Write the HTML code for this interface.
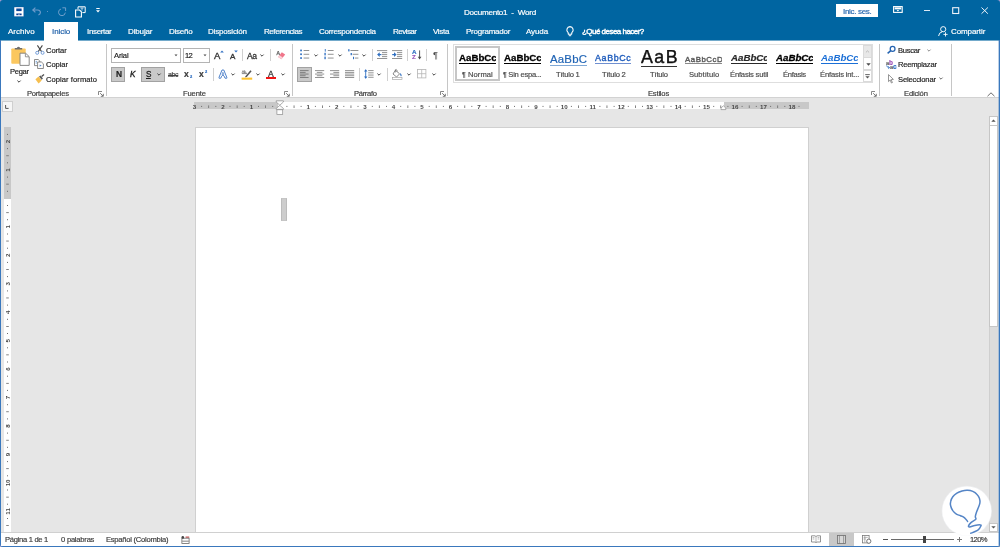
<!DOCTYPE html>
<html lang="es">
<head>
<meta charset="utf-8">
<title>Documento1 - Word</title>
<style>
html,body{margin:0;padding:0}
body{width:1000px;height:547px;overflow:hidden;position:relative;background:#e6e6e6;font-family:"Liberation Sans", sans-serif;font-size:8px;color:#222}
div,span,svg,i,b{position:absolute;box-sizing:border-box}
.n{position:static}
.t{will-change:transform;white-space:nowrap;line-height:1;font-style:normal;-webkit-text-stroke:0.18px currentColor}
svg{overflow:visible}
#win{left:0;top:0;width:1000px;height:547px;overflow:hidden}
#titlebar{left:0;top:0;width:1000px;height:40.5px;background:#0065a1}
#tab-on{left:44px;top:22px;width:34px;height:19px;background:#fff}
#signin{left:836px;top:4px;width:42px;height:13px;background:#fff}
#ribbon{left:0;top:40px;width:1000px;height:58px;background:#fff;border-bottom:1px solid #d2d2d2}
.gsep{top:4px;width:1px;height:52px;background:#c6c6c6}
.sep{width:1px;background:#d0d0d0}
.box{background:#fff;border:1px solid #b4b4b4}
.btn-on{background:#c9c9c9;border:1px solid #a2a2a2}
#gallery{left:453px;top:4px;width:420px;height:39px;border:1px solid #dedede;background:#fff}
#docarea{left:0;top:98px;width:1000px;height:435px;background:#e6e6e6}
#page{left:195px;top:28.5px;width:614px;height:420px;background:#fff;border:1px solid #d0d0d0;border-bottom:0}
#status{left:0;top:532px;width:1000px;height:15px;background:#fff;border-top:1px solid #d0d0d0}
#edge-l{left:0;top:40px;width:1px;height:507px;background:#3a78bd}
#edge-r{left:999px;top:40px;width:1px;height:507px;background:#3a78bd}
#edge-b{left:0;top:546px;width:1000px;height:1px;background:#3a78bd}

</style>
</head>
<body>
<div id="win">
<div id="titlebar">
<svg style="left:13.8px;top:6.5px" width="10" height="10" viewBox="0 0 10 10"><rect x="0.1" y="0.1" width="9.6" height="9.5" rx="0.5" fill="#fff" stroke="#0c3f95" stroke-width="0.3"/><rect x="2.3" y="1.5" width="5.3" height="2.6" fill="#0c3f95"/><rect x="3.1" y="2.3" width="3.7" height="0.9" fill="#0a5aa3"/><rect x="2.3" y="6.5" width="5.3" height="1.7" fill="#0c3f95"/><rect x="4.3" y="7.4" width="1.3" height="1.2" fill="#fff"/></svg>
<svg style="left:32.4px;top:6.6px" width="10" height="9" viewBox="0 0 10 9"><path d="M3.4 0.6 L0.8 3 L3.4 5.4 M0.8 3 H5.6 Q8.6 3.2 8.4 5.8 Q8.2 7.4 6.4 8" fill="none" stroke="#6c9bcb" stroke-width="1.2"/></svg>
<div style="left:46.5px;top:11px;width:1px;height:1px;background:#5f93c4"></div>
<svg style="left:57px;top:6.6px" width="10" height="10" viewBox="0 0 10 10"><path d="M8.3 5.6 A3.4 3.4 0 1 1 4 2" fill="none" stroke="#6f9fcb" stroke-width="1"/><path d="M5.4 0.8 H8.6 V4" fill="none" stroke="#6f9fcb" stroke-width="1"/></svg>
<svg style="left:74.5px;top:5.5px" width="11" height="12" viewBox="0 0 11 12"><path d="M3 3.2 V0.8 H10.2 V6.6 H7.4" fill="none" stroke="#fff" stroke-width="1"/><path d="M0.6 4 H4.6 L6.4 5.8 V11 H0.6 Z" fill="none" stroke="#fff" stroke-width="1.1"/><path d="M5.4 2 L8.6 2 M7 2 V4.6" stroke="#cfe0f0" stroke-width="0.9" fill="none"/></svg>
<svg style="left:96.2px;top:8.4px" width="4" height="5" viewBox="0 0 4 5"><rect x="0.3" y="0" width="3.4" height="1" fill="#fff"/><path d="M0 2.2 H4 L2 4.6 Z" fill="#fff"/></svg>
<span class="t" style="left:464px;font-size:8.1px;color:#ffffff;top:8.5px;letter-spacing:-0.252px;">Documento1&nbsp; -&nbsp; Word</span><div id="signin"><span class="t" style="left:6.6px;font-size:8px;color:#2566ae;top:3.75px;letter-spacing:-0.318px;">Inic. ses.</span></div>
<svg style="left:892.6px;top:6.4px" width="10" height="7" viewBox="0 0 10 7"><rect x="0.6" y="0.6" width="8.6" height="5.8" fill="none" stroke="#fff" stroke-width="1.1"/><rect x="1.6" y="1.4" width="6.6" height="2" fill="#fff"/><path d="M3.6 4 H6.2 L4.9 5.6 Z" fill="#fff"/></svg>
<div style="left:924px;top:9.6px;width:6.4px;height:1.2px;background:#dbe8f4"></div>
<svg style="left:952px;top:6.6px" width="8" height="8" viewBox="0 0 8 8"><rect x="0.7" y="0.7" width="6" height="5.8" fill="none" stroke="#eef4fa" stroke-width="1.1"/></svg>
<svg style="left:981.4px;top:6.8px" width="8" height="8" viewBox="0 0 8 8"><path d="M0.5 0.5 L6.9 6.7 M6.9 0.5 L0.5 6.7" stroke="#eef4fa" stroke-width="1" fill="none"/></svg>
<div id="tab-on"></div>
<span class="t" style="left:8.4px;font-size:8px;color:#ffffff;top:28.25px;letter-spacing:-0.012px;">Archivo</span><span class="t" style="left:51.8px;font-size:8px;color:#1d5fa8;top:28.25px;letter-spacing:-0.081px;">Inicio</span><span class="t" style="left:86.6px;font-size:8px;color:#ffffff;top:28.25px;letter-spacing:-0.341px;">Insertar</span><span class="t" style="left:128px;font-size:8px;color:#ffffff;top:28.25px;letter-spacing:-0.135px;">Dibujar</span><span class="t" style="left:169px;font-size:8px;color:#ffffff;top:28.25px;letter-spacing:-0.251px;">Diseño</span><span class="t" style="left:208.4px;font-size:8px;color:#ffffff;top:28.25px;letter-spacing:-0.191px;">Disposición</span><span class="t" style="left:264px;font-size:8px;color:#ffffff;top:28.25px;letter-spacing:-0.426px;">Referencias</span><span class="t" style="left:319px;font-size:8px;color:#ffffff;top:28.25px;letter-spacing:-0.289px;">Correspondencia</span><span class="t" style="left:392.6px;font-size:8px;color:#ffffff;top:28.25px;letter-spacing:-0.532px;">Revisar</span><span class="t" style="left:432.5px;font-size:8px;color:#ffffff;top:28.25px;letter-spacing:-0.328px;">Vista</span><span class="t" style="left:465.5px;font-size:8px;color:#ffffff;top:28.25px;letter-spacing:-0.226px;">Programador</span><span class="t" style="left:526px;font-size:8px;color:#ffffff;top:28.25px;letter-spacing:-0.109px;">Ayuda</span><svg style="left:566px;top:26.4px" width="8" height="11" viewBox="0 0 8 11"><path d="M4 0.6 A3.3 3.3 0 0 1 6 6.4 L5.6 8.2 H2.4 L2 6.4 A3.3 3.3 0 0 1 4 0.6 Z" fill="none" stroke="#fff" stroke-width="1.1"/><path d="M2.8 9.7 H5.2" stroke="#fff" stroke-width="1"/></svg>
<span class="t" style="left:581.6px;font-size:8px;color:#ffffff;top:28.25px;letter-spacing:-0.525px;-webkit-text-stroke:0.4px #fff;">¿Qué desea hacer?</span><svg style="left:938px;top:26px" width="10" height="10.5" viewBox="0 0 10 10.5"><circle cx="5.2" cy="3.2" r="2.6" fill="none" stroke="#fff" stroke-width="0.95"/><path d="M0.6 10 Q1 6.4 4.2 5.8" fill="none" stroke="#fff" stroke-width="0.95"/><path d="M5.4 8.4 H9.6 M7.5 6.3 V10.5" stroke="#fff" stroke-width="0.9"/></svg>
<span class="t" style="left:950.5px;font-size:8px;color:#ffffff;top:28.25px;letter-spacing:-0.103px;">Compartir</span></div>
<div id="ribbon">
<div style="left:0;top:0;width:44px;height:1px;background:#73aacb"></div><div style="left:78px;top:0;width:922px;height:1px;background:#73aacb"></div>
<svg style="left:11px;top:5.5px" width="19" height="20" viewBox="0 0 19 20"><rect x="0.3" y="2.4" width="14.4" height="15.4" rx="0.8" fill="#fbc75f"/><path d="M3.8 3.6 V2 H5.8 Q7.5 -0.4 9.2 2 H11.2 V3.6 Z" fill="#6d6d6d"/><path d="M9 7.2 H14.6 L18.2 10.6 V19.4 H9 Z" fill="#fff" stroke="#7d7d7d" stroke-width="0.9"/><path d="M14.4 7.4 V10.8 H18" fill="none" stroke="#7d7d7d" stroke-width="0.8"/></svg>
<span class="t" style="left:9.75px;font-size:7.6px;color:#222222;top:28px;letter-spacing:-0.303px;">Pegar</span><svg style="left:17px;top:40px" width="4" height="3" viewBox="0 0 4 3"><path d="M0.4 0.6 L2 2.2 L3.6 0.6" fill="none" stroke="#404040" stroke-width="1"/></svg>
<svg style="left:34.5px;top:4.5px" width="10" height="10" viewBox="0 0 10 10"><path d="M2.4 0.4 L6.6 6.6 M7.4 0.4 L3.2 6.6" stroke="#444" stroke-width="1.05" fill="none"/><circle cx="2.2" cy="7.8" r="1.5" fill="none" stroke="#6f9ad6" stroke-width="0.95"/><circle cx="7.6" cy="7.8" r="1.5" fill="none" stroke="#6f9ad6" stroke-width="0.95"/></svg>
<span class="t" style="left:46px;font-size:7.6px;color:#222222;top:7px;letter-spacing:-0.085px;">Cortar</span><svg style="left:34px;top:19px" width="10" height="10" viewBox="0 0 10 10"><path d="M0.5 0.5 H4.2 L5.8 2 V6.6 H0.5 Z" fill="#fff" stroke="#707070" stroke-width="0.8"/><path d="M3.6 3 H7.4 L9.4 4.8 V9.5 H3.6 Z" fill="#fff" stroke="#707070" stroke-width="0.8"/><path d="M5.6 5.4 L7.6 6.6 L5.6 7.8 Z" fill="#4a86cf"/><path d="M1.6 2.4 H3 M1.6 4 H3" stroke="#4a86cf" stroke-width="0.7"/></svg>
<span class="t" style="left:46px;font-size:7.6px;color:#222222;top:21.25px;letter-spacing:-0.062px;">Copiar</span><svg style="left:34.5px;top:33.5px" width="10" height="10" viewBox="0 0 10 10"><path d="M0.4 5.2 L3.6 2.6 L6.6 6.4 L3.6 9.4 Z" fill="#f6bf4f"/><path d="M4 2.6 L5.6 1.4 L8 4.4 L6.6 5.8 Z" fill="#5d5d5d"/><path d="M6.6 2.4 L9 0.4" stroke="#4d4d4d" stroke-width="1.3"/></svg>
<span class="t" style="left:46px;font-size:7.6px;color:#222222;top:35.5px;letter-spacing:0.055px;">Copiar formato</span><span class="t" style="left:27.25px;font-size:7.6px;color:#3a3a3a;top:50px;letter-spacing:-0.247px;">Portapapeles</span><svg style="left:98.3px;top:50.8px" width="6" height="6" viewBox="0 0 6 6"><path d="M0.5 4 V0.5 H4" fill="none" stroke="#7a7a7a" stroke-width="0.9"/><path d="M2.2 2.2 L5 5 M5.3 2.8 V5.3 H2.8" fill="none" stroke="#6a6a6a" stroke-width="0.9"/></svg>
<div class="gsep" style="left:106px"></div>
<div class="box" style="left:111px;top:7.5px;width:69.6px;height:15px"><span class="t" style="left:1.6px;font-size:7.6px;color:#222222;top:3.5px;letter-spacing:-0.141px;">Arial</span></div>
<svg style="left:174px;top:13.8px" width="4" height="3" viewBox="0 0 4 3"><path d="M0.5 0.6 H3.5 L2 2.3 Z" fill="#444"/></svg>
<div class="box" style="left:182.5px;top:7.5px;width:27px;height:15px"><span class="t" style="left:1.6px;font-size:7.6px;color:#222222;top:3.5px;letter-spacing:-0.627px;">12</span></div>
<svg style="left:202.6px;top:13.8px" width="4" height="3" viewBox="0 0 4 3"><path d="M0.5 0.6 H3.5 L2 2.3 Z" fill="#444"/></svg>
<span class="t" style="left:214.2px;font-size:9.5px;color:#333;top:10.5px;-webkit-text-stroke:0.35px #333;">A</span><svg style="left:219.5px;top:10.2px" width="4" height="3" viewBox="0 0 4 3"><path d="M0.2 2.6 H3.8 L2 0.4 Z" fill="#2f6fc1"/></svg>
<span class="t" style="left:230px;font-size:8px;color:#333;top:12.5px;-webkit-text-stroke:0.35px #333;">A</span><svg style="left:234.2px;top:10.2px" width="4" height="3" viewBox="0 0 4 3"><path d="M0.2 0.4 H3.8 L2 2.6 Z" fill="#2f6fc1"/></svg>
<div class="sep" style="left:242.3px;top:8.8px;height:12.4px"></div>
<span class="t" style="left:247px;font-size:8.5px;color:#333;top:11.5px;letter-spacing:-0.403px;-webkit-text-stroke:0.3px #333;">Aa</span><svg style="left:260px;top:13.6px" width="4" height="3" viewBox="0 0 4 3"><path d="M0.4 0.6 L2 2.2 L3.6 0.6" fill="none" stroke="#404040" stroke-width="1"/></svg>
<div class="sep" style="left:270.4px;top:8.8px;height:12.4px"></div>
<svg style="left:275.5px;top:9.5px" width="10" height="10" viewBox="0 0 10 10"><path d="M0.6 5.2 L2.2 1 L3.8 5.2 M1.2 3.8 H3.2" fill="none" stroke="#555" stroke-width="0.8"/><path d="M5.8 2.2 L9.2 4.4 L5.4 9.2 L2.2 7 Z" fill="#f0758a"/><path d="M3.5 5.3 L6.8 7.5 L5.4 9.2 L2.2 7 Z" fill="#fbd0d7"/></svg>
<div class="btn-on" style="left:111px;top:27px;width:14.2px;height:14.8px"><span class="t" style="left:3.7px;font-size:8.4px;color:#1e1e1e;font-weight:700;top:1.5px;letter-spacing:-0.263px;">N</span></div>
<span class="t" style="left:130.4px;font-size:8.2px;color:#1e1e1e;font-style:italic;top:30.5px;letter-spacing:-0.069px;-webkit-text-stroke:0.35px #1e1e1e;">K</span><div class="btn-on" style="left:141px;top:27px;width:23.8px;height:14.8px"><span class="t" style="left:4.2px;font-size:8.2px;color:#1e1e1e;top:2.5px;letter-spacing:-0.669px;text-decoration:underline;-webkit-text-stroke:0.3px #1e1e1e;">S</span></div>
<svg style="left:157.4px;top:33px" width="4" height="3" viewBox="0 0 4 3"><path d="M0.4 0.6 L2 2.2 L3.6 0.6" fill="none" stroke="#404040" stroke-width="1"/></svg>
<span class="t" style="left:168px;font-size:7px;color:#444;top:30.5px;letter-spacing:-0.366px;text-decoration:line-through;text-decoration-thickness:0.6px;">abc</span><span class="t" style="left:184px;font-size:8.5px;color:#3a3a3a;font-weight:700;top:29.5px;letter-spacing:-0.134px;">x</span><span class="t" style="left:189.6px;font-size:4px;color:#2f6fc1;font-weight:700;top:34.5px;">2</span><span class="t" style="left:199px;font-size:8.5px;color:#3a3a3a;font-weight:700;top:29.5px;letter-spacing:-0.134px;">x</span><span class="t" style="left:204.6px;font-size:4px;color:#2f6fc1;font-weight:700;top:29.5px;">2</span><div class="sep" style="left:212.5px;top:28px;height:12.6px"></div>
<svg style="left:217.6px;top:28.8px" width="10" height="10" viewBox="0 0 10 10"><path d="M1 9.2 L1 8.4 L4 1 H5.8 L8.8 8.4 L8.8 9.2 L7 9.2 L6.2 7.2 Q4.9 5 3.6 7.2 L2.8 9.2 Z" fill="#fff" stroke="#3b74c4" stroke-width="0.9" stroke-linejoin="round"/><path d="M4.9 3.2 L4 5.4 H5.8 Z" fill="none" stroke="#3b74c4" stroke-width="0.6"/></svg>
<svg style="left:230.8px;top:32.7px" width="4" height="3" viewBox="0 0 4 3"><path d="M0.4 0.6 L2 2.2 L3.6 0.6" fill="none" stroke="#404040" stroke-width="1"/></svg>
<svg style="left:241px;top:28.5px" width="12" height="11" viewBox="0 0 12 11"><rect x="0.6" y="8.6" width="10.6" height="2.1" fill="#fdc230"/><path d="M4.4 7.2 L9.4 1.2 L10.6 2.2 L5.8 8 L4 8.2 Z" fill="#555"/><path d="M0.8 4.6 H6" stroke="#555" stroke-width="0.7"/><path d="M1 4 L2 1.6 L3 4 M3.6 1.2 V4 M3.6 3 Q5.2 2.2 5 4" fill="none" stroke="#555" stroke-width="0.6"/></svg>
<svg style="left:255.8px;top:32.7px" width="4" height="3" viewBox="0 0 4 3"><path d="M0.4 0.6 L2 2.2 L3.6 0.6" fill="none" stroke="#404040" stroke-width="1"/></svg>
<span class="t" style="left:268.3px;font-size:8.6px;color:#3a3a3a;top:29.75px;-webkit-text-stroke:0.3px #3a3a3a;">A</span><div style="left:266px;top:37.1px;width:10.2px;height:2.1px;background:#f01414"></div>
<svg style="left:280.6px;top:32.7px" width="4" height="3" viewBox="0 0 4 3"><path d="M0.4 0.6 L2 2.2 L3.6 0.6" fill="none" stroke="#404040" stroke-width="1"/></svg>
<span class="t" style="left:183px;font-size:7.6px;color:#3a3a3a;top:50px;letter-spacing:-0.143px;">Fuente</span><svg style="left:284.2px;top:50.8px" width="6" height="6" viewBox="0 0 6 6"><path d="M0.5 4 V0.5 H4" fill="none" stroke="#7a7a7a" stroke-width="0.9"/><path d="M2.2 2.2 L5 5 M5.3 2.8 V5.3 H2.8" fill="none" stroke="#6a6a6a" stroke-width="0.9"/></svg>
<div class="gsep" style="left:292px"></div>
<svg style="left:299.6px;top:9.4px" width="12" height="12" viewBox="0 0 12 12"><rect x="3.6" y="1" width="5.6" height="0.9" fill="#868686"/><rect x="3.6" y="4.8" width="5.6" height="0.9" fill="#868686"/><rect x="3.6" y="8.6" width="5.6" height="0.9" fill="#868686"/><rect x="0.2" y="0.6" width="1.7" height="1.7" fill="#2f6fc1"/><rect x="0.2" y="4.4" width="1.7" height="1.7" fill="#2f6fc1"/><rect x="0.2" y="8.2" width="1.7" height="1.7" fill="#2f6fc1"/></svg>
<svg style="left:313.6px;top:13.7px" width="4" height="3" viewBox="0 0 4 3"><path d="M0.4 0.6 L2 2.2 L3.6 0.6" fill="none" stroke="#404040" stroke-width="1"/></svg>
<svg style="left:324px;top:9.4px" width="12" height="12" viewBox="0 0 12 12"><rect x="3.8" y="1" width="5.8" height="0.9" fill="#868686"/><rect x="3.8" y="4.8" width="5.8" height="0.9" fill="#868686"/><rect x="3.8" y="8.6" width="5.8" height="0.9" fill="#868686"/><rect x="0.8" y="0" width="0.9" height="2.6" fill="#2f6fc1"/><rect x="0.2" y="3.8" width="1.8" height="2.6" fill="#2f6fc1" opacity="0.75"/><rect x="0.2" y="7.6" width="1.8" height="2.6" fill="#2f6fc1" opacity="0.75"/></svg>
<svg style="left:338.1px;top:13.7px" width="4" height="3" viewBox="0 0 4 3"><path d="M0.4 0.6 L2 2.2 L3.6 0.6" fill="none" stroke="#404040" stroke-width="1"/></svg>
<svg style="left:348px;top:9.4px" width="12" height="12" viewBox="0 0 12 12"><rect x="2.4" y="1" width="8" height="0.9" fill="#868686"/><rect x="4.6" y="4.8" width="5.8" height="0.9" fill="#868686"/><rect x="6.8" y="8.6" width="3.6" height="0.9" fill="#868686"/><rect x="0.2" y="0.2" width="1.3" height="2.2" fill="#2f6fc1"/><rect x="2.6" y="4" width="1.3" height="2.2" fill="#2f6fc1"/><rect x="5" y="7.8" width="1" height="2.4" fill="#2f6fc1"/></svg>
<svg style="left:361.6px;top:13.7px" width="4" height="3" viewBox="0 0 4 3"><path d="M0.4 0.6 L2 2.2 L3.6 0.6" fill="none" stroke="#404040" stroke-width="1"/></svg>
<div class="sep" style="left:371.8px;top:8.6px;height:12.4px"></div>
<svg style="left:376.6px;top:9.9px" width="12" height="12" viewBox="0 0 12 12"><rect x="0" y="0.2" width="10.2" height="0.9" fill="#868686"/><rect x="5" y="2.2" width="5.2" height="0.9" fill="#868686"/><rect x="5" y="4.2" width="5.2" height="0.9" fill="#868686"/><rect x="5" y="6.2" width="5.2" height="0.9" fill="#868686"/><rect x="0" y="8" width="10.2" height="0.9" fill="#868686"/><path d="M4.4 4.6 H1.2" fill="none" stroke="#2f6fc1" stroke-width="1.2"/><path d="M0.1 4.6 L2.7 2.3 V6.9 Z" fill="#2f6fc1"/></svg>
<svg style="left:391.6px;top:9.9px" width="12" height="12" viewBox="0 0 12 12"><rect x="0" y="0.2" width="10.2" height="0.9" fill="#868686"/><rect x="5" y="2.2" width="5.2" height="0.9" fill="#868686"/><rect x="5" y="4.2" width="5.2" height="0.9" fill="#868686"/><rect x="5" y="6.2" width="5.2" height="0.9" fill="#868686"/><rect x="0" y="8" width="10.2" height="0.9" fill="#868686"/><path d="M0.2 4.6 H3.4" fill="none" stroke="#2f6fc1" stroke-width="1.2"/><path d="M4.6 4.6 L2 2.3 V6.9 Z" fill="#2f6fc1"/></svg>
<div class="sep" style="left:406.6px;top:8.6px;height:12.4px"></div>
<span class="t" style="left:411.8px;font-size:6.2px;color:#2f6fc1;font-weight:700;top:8.75px;">A</span><span class="t" style="left:412.1px;font-size:6.2px;color:#9a55b8;font-weight:700;top:14.25px;">Z</span><svg style="left:416.6px;top:9.6px" width="5" height="10" viewBox="0 0 5 10"><path d="M2.6 0.4 V7.6" fill="none" stroke="#4a4a4a" stroke-width="0.9"/><path d="M0.8 6.8 H4.4 L2.6 9.4 Z" fill="#4a4a4a"/></svg>
<div class="sep" style="left:425.8px;top:8.6px;height:12.4px"></div>
<span class="t" style="left:432.8px;font-size:9.4px;color:#4a4a4a;top:9.5px;-webkit-text-stroke:0;">¶</span><div class="btn-on" style="left:297px;top:27px;width:14.6px;height:14.8px"></div>
<svg style="left:300px;top:30.4px" width="12" height="12" viewBox="0 0 12 12"><rect x="0" y="0.2" width="8.6" height="0.9" fill="#757575"/><rect x="0" y="1.9" width="5.6" height="0.9" fill="#757575"/><rect x="0" y="3.6" width="8.6" height="0.9" fill="#757575"/><rect x="0" y="5.3" width="5.6" height="0.9" fill="#757575"/><rect x="0" y="7" width="8.6" height="0.9" fill="#757575"/></svg>
<svg style="left:314.8px;top:30.4px" width="12" height="12" viewBox="0 0 12 12"><rect x="0" y="0.2" width="9.2" height="0.9" fill="#868686"/><rect x="1.8" y="1.9" width="5.6" height="0.9" fill="#868686"/><rect x="0" y="3.6" width="9.2" height="0.9" fill="#868686"/><rect x="1.8" y="5.3" width="5.6" height="0.9" fill="#868686"/><rect x="0" y="7" width="9.2" height="0.9" fill="#868686"/></svg>
<svg style="left:330px;top:30.4px" width="12" height="12" viewBox="0 0 12 12"><rect x="0" y="0.2" width="9.2" height="0.9" fill="#868686"/><rect x="3.4" y="1.9" width="5.8" height="0.9" fill="#868686"/><rect x="0" y="3.6" width="9.2" height="0.9" fill="#868686"/><rect x="3.4" y="5.3" width="5.8" height="0.9" fill="#868686"/><rect x="0" y="7" width="9.2" height="0.9" fill="#868686"/></svg>
<svg style="left:345px;top:30.4px" width="12" height="12" viewBox="0 0 12 12"><rect x="0" y="0.2" width="9.2" height="0.9" fill="#868686"/><rect x="0" y="1.9" width="9.2" height="0.9" fill="#868686"/><rect x="0" y="3.6" width="9.2" height="0.9" fill="#868686"/><rect x="0" y="5.3" width="9.2" height="0.9" fill="#868686"/><rect x="0" y="7" width="9.2" height="0.9" fill="#868686"/></svg>
<div class="sep" style="left:359.2px;top:28px;height:12.6px"></div>
<svg style="left:364px;top:29px" width="12" height="12" viewBox="0 0 12 12"><rect x="4.2" y="1.2" width="5.4" height="0.9" fill="#868686"/><rect x="4.2" y="3.4" width="5.4" height="0.9" fill="#868686"/><rect x="4.2" y="5.6" width="5.4" height="0.9" fill="#868686"/><rect x="4.2" y="7.8" width="5.4" height="0.9" fill="#868686"/><path d="M1.7 0.8 V9.2" stroke="#2f6fc1" stroke-width="0.9"/><path d="M0 2.6 L1.7 0.2 L3.4 2.6 Z M0 7.4 L1.7 9.8 L3.4 7.4 Z" fill="#2f6fc1"/></svg>
<svg style="left:377.1px;top:32.8px" width="4" height="3" viewBox="0 0 4 3"><path d="M0.4 0.6 L2 2.2 L3.6 0.6" fill="none" stroke="#404040" stroke-width="1"/></svg>
<div class="sep" style="left:387.4px;top:28px;height:12.6px"></div>
<svg style="left:392.4px;top:28.6px" width="11" height="11" viewBox="0 0 11 11"><path d="M3.4 1.2 L7.6 4.8 L4.6 8 L1 5 Z" fill="#fff" stroke="#6a6a6a" stroke-width="0.8" stroke-linejoin="round"/><path d="M3.4 3.4 V0.8 Q4.4 -0.2 5 1.4 V2.6" fill="none" stroke="#6a6a6a" stroke-width="0.7"/><path d="M8.2 4 Q10.6 6 9 7.6 Q7.8 7 8.2 4 Z" fill="#2f6fc1"/><rect x="0.4" y="8.6" width="9.6" height="2" fill="#fff" stroke="#9a9a9a" stroke-width="0.6"/></svg>
<svg style="left:406.8px;top:32.8px" width="4" height="3" viewBox="0 0 4 3"><path d="M0.4 0.6 L2 2.2 L3.6 0.6" fill="none" stroke="#404040" stroke-width="1"/></svg>
<svg style="left:417px;top:29px" width="10" height="10" viewBox="0 0 10 10"><rect x="0.5" y="0.5" width="8.4" height="8.4" fill="none" stroke="#b4b4b4" stroke-width="0.8"/><path d="M4.7 0.5 V8.9 M0.5 4.7 H8.9" stroke="#b4b4b4" stroke-width="0.8"/></svg>
<svg style="left:431.5px;top:32.8px" width="4" height="3" viewBox="0 0 4 3"><path d="M0.4 0.6 L2 2.2 L3.6 0.6" fill="none" stroke="#404040" stroke-width="1"/></svg>
<span class="t" style="left:353.75px;font-size:7.6px;color:#3a3a3a;top:50px;letter-spacing:-0.329px;">Párrafo</span><svg style="left:440px;top:50.8px" width="6" height="6" viewBox="0 0 6 6"><path d="M0.5 4 V0.5 H4" fill="none" stroke="#7a7a7a" stroke-width="0.9"/><path d="M2.2 2.2 L5 5 M5.3 2.8 V5.3 H2.8" fill="none" stroke="#6a6a6a" stroke-width="0.9"/></svg>
<div class="gsep" style="left:447.4px"></div>
<div id="gallery"></div>
<div style="left:455px;top:6px;width:44.8px;height:34.8px;border:2px solid #c6c6c6;background:#fff"></div>
<div style="left:459px;top:4px;width:36.8px;height:36px;overflow:hidden"><span class="t" style="left:0px;font-size:9.7px;color:#000;font-weight:700;top:9px;-webkit-text-stroke:0.3px #000;">AaBbCcDd</span></div>
<div style="left:459px;top:22.5px;width:36.8px;height:1.1px;background:#000"></div>
<span class="t" style="left:461.9px;font-size:7.6px;color:#4a4a4a;top:30.5px;letter-spacing:0.055px;"><span class="n" style="font-size:7px">¶</span> Normal</span><div style="left:504px;top:4px;width:37px;height:36px;overflow:hidden"><span class="t" style="left:0px;font-size:9.7px;color:#000;font-weight:700;top:9px;-webkit-text-stroke:0.3px #000;">AaBbCcDd</span></div>
<div style="left:504px;top:22.5px;width:37px;height:1.1px;background:#000"></div>
<span class="t" style="left:503px;font-size:7.6px;color:#4a4a4a;top:30.5px;letter-spacing:-0.259px;"><span class="n" style="font-size:7px">¶</span> Sin espa...</span><div style="left:549.8px;top:4px;width:36.8px;height:36px;overflow:hidden"><span class="t" style="left:0px;font-size:11.4px;color:#1f63b4;top:10px;letter-spacing:0.221px;-webkit-text-stroke:0.2px #1f63b4;">AaBbC</span></div>
<div style="left:549.8px;top:24.6px;width:36.8px;height:1.1px;background:#7fa8d6"></div>
<span class="t" style="left:556px;font-size:7.6px;color:#4a4a4a;top:30.5px;letter-spacing:-0.216px;">Título 1</span><div style="left:595px;top:4px;width:36.4px;height:36px;overflow:hidden"><span class="t" style="left:0px;font-size:8.9px;color:#1f5cbc;top:10.25px;letter-spacing:0.64px;-webkit-text-stroke:0.35px #1f5cbc;">AaBbCc</span></div>
<div style="left:595px;top:22.6px;width:36.4px;height:1px;background:#6f8fd0"></div>
<span class="t" style="left:601.5px;font-size:7.6px;color:#4a4a4a;top:30.5px;letter-spacing:-0.216px;">Título 2</span><div style="left:640.6px;top:9.6px;width:36.6px;height:30.4px;overflow:hidden"><span class="t" style="left:0px;font-size:17.8px;color:#111;top:-0.75px;letter-spacing:1.464px;-webkit-text-stroke:0.4px #111;">AaB</span></div>
<div style="left:640.6px;top:25.8px;width:36.6px;height:1px;background:#333"></div>
<span class="t" style="left:650px;font-size:7.6px;color:#4a4a4a;top:30.5px;letter-spacing:-0.183px;">Título</span><div style="left:685px;top:4px;width:37.4px;height:36px;overflow:hidden"><span class="t" style="left:0px;font-size:7.9px;color:#5a5a5a;top:11.5px;letter-spacing:0.506px;-webkit-text-stroke:0.4px #5a5a5a;">AaBbCcD</span></div>
<div style="left:685px;top:22.7px;width:37.4px;height:1px;background:#8a8a8a"></div>
<span class="t" style="left:688.75px;font-size:7.6px;color:#4a4a4a;top:30.5px;letter-spacing:0.024px;">Subtítulo</span><div style="left:730.6px;top:4px;width:36.8px;height:36px;overflow:hidden"><span class="t" style="left:0px;font-size:9.7px;color:#2a2a2a;font-weight:700;font-style:italic;top:9px;-webkit-text-stroke:0.2px #2a2a2a;">AaBbCcDd</span></div>
<div style="left:730.6px;top:22.5px;width:36.8px;height:1.1px;background:#2a2a2a"></div>
<span class="t" style="left:730px;font-size:7.6px;color:#4a4a4a;top:30.5px;letter-spacing:-0.179px;">Énfasis sutil</span><div style="left:776px;top:4px;width:36.6px;height:36px;overflow:hidden"><span class="t" style="left:0px;font-size:9.7px;color:#000;font-weight:700;font-style:italic;top:9px;-webkit-text-stroke:0.3px #000;">AaBbCcDd</span></div>
<div style="left:776px;top:22.5px;width:36.6px;height:1.1px;background:#000"></div>
<span class="t" style="left:783px;font-size:7.6px;color:#4a4a4a;top:30.5px;letter-spacing:-0.301px;">Énfasis</span><div style="left:821.2px;top:4px;width:36.6px;height:36px;overflow:hidden"><span class="t" style="left:0px;font-size:9.7px;color:#1b6fd6;font-weight:700;font-style:italic;top:9px;-webkit-text-stroke:0;">AaBbCcDd</span></div>
<div style="left:821.2px;top:22.5px;width:36.6px;height:1px;background:#1b6fd6"></div>
<span class="t" style="left:820px;font-size:7.6px;color:#4a4a4a;top:30.5px;letter-spacing:-0.155px;">Énfasis int...</span><div style="left:863px;top:4.6px;width:9.4px;height:13px;background:#e8e8e8;border:1px solid #dadada"></div>
<svg style="left:865.4px;top:10px" width="5" height="3" viewBox="0 0 5 3"><path d="M0.9 2.4 L2.5 0.9 L4.1 2.4" fill="none" stroke="#b8b8b8" stroke-width="0.9"/></svg>
<div style="left:863px;top:17.4px;width:9.4px;height:12.8px;background:#fff;border:1px solid #dadada"></div>
<svg style="left:865.5px;top:22.8px" width="5" height="3" viewBox="0 0 5 3"><path d="M0.3 0.3 H4.7 L2.5 2.8 Z" fill="#4a4a4a"/></svg>
<div style="left:863px;top:30px;width:9.4px;height:12.4px;background:#fff;border:1px solid #dadada"></div>
<svg style="left:865.4px;top:33.6px" width="5" height="5" viewBox="0 0 5 5"><rect x="0.2" y="0.2" width="4.6" height="0.9" fill="#555"/><path d="M0.4 2.2 H4.6 L2.5 4.6 Z" fill="#555"/></svg>
<span class="t" style="left:647.75px;font-size:7.6px;color:#3a3a3a;top:50px;letter-spacing:-0.196px;">Estilos</span><svg style="left:871px;top:50.8px" width="6" height="6" viewBox="0 0 6 6"><path d="M0.5 4 V0.5 H4" fill="none" stroke="#7a7a7a" stroke-width="0.9"/><path d="M2.2 2.2 L5 5 M5.3 2.8 V5.3 H2.8" fill="none" stroke="#6a6a6a" stroke-width="0.9"/></svg>
<div class="gsep" style="left:878.6px"></div>
<svg style="left:886.6px;top:5.8px" width="9" height="8" viewBox="0 0 9 8"><circle cx="5.6" cy="2.9" r="2.4" fill="none" stroke="#2463b0" stroke-width="1.25"/><path d="M3.8 4.6 L0.6 7.4" stroke="#2463b0" stroke-width="1.5"/></svg>
<span class="t" style="left:898px;font-size:7.6px;color:#222222;top:7px;letter-spacing:-0.29px;">Buscar</span><svg style="left:927px;top:8.7px" width="4" height="3" viewBox="0 0 4 3"><path d="M0.4 0.6 L2 2.2 L3.6 0.6" fill="none" stroke="#8a8a8a" stroke-width="1"/></svg>
<svg style="left:886px;top:19.6px" width="10" height="10" viewBox="0 0 10 10"></svg>
<span class="t" style="left:886px;font-size:5.6px;color:#555;top:20.5px;">a</span><span class="t" style="left:889px;font-size:6.4px;color:#9a4fb5;font-weight:700;top:19.5px;">b</span><span class="t" style="left:889.6px;font-size:5.6px;color:#555;top:25px;">a</span><span class="t" style="left:892.6px;font-size:6.4px;color:#2f6fc1;font-weight:700;top:24px;">c</span><svg style="left:886px;top:25px" width="5" height="4" viewBox="0 0 5 4"><path d="M0.6 0.4 Q0.8 2.6 3.4 2.6 M2.2 1.4 L3.6 2.6 L2.2 3.8" fill="none" stroke="#2f6fc1" stroke-width="0.8"/></svg>
<span class="t" style="left:898px;font-size:7.6px;color:#222222;top:21.25px;letter-spacing:-0.225px;">Reemplazar</span><svg style="left:888.4px;top:33.6px" width="6" height="10" viewBox="0 0 6 10"><path d="M0.5 0.6 V7.6 L2.2 6 L3.4 9 L4.4 8.6 L3.2 5.6 L5.4 5.4 Z" fill="#fff" stroke="#6a6a6a" stroke-width="0.7" stroke-linejoin="round"/></svg>
<span class="t" style="left:898px;font-size:7.6px;color:#222222;top:35.5px;letter-spacing:-0.172px;">Seleccionar</span><svg style="left:938.7px;top:37.4px" width="4" height="3" viewBox="0 0 4 3"><path d="M0.4 0.6 L2 2.2 L3.6 0.6" fill="none" stroke="#6a6a6a" stroke-width="1"/></svg>
<span class="t" style="left:904px;font-size:7.6px;color:#3a3a3a;top:50px;letter-spacing:-0.172px;">Edición</span><div class="gsep" style="left:951.2px"></div>
<svg style="left:986.8px;top:52.4px" width="8" height="5" viewBox="0 0 8 5"><path d="M0.5 4.2 L4 0.8 L7.5 4.2" fill="none" stroke="#5a5a5a" stroke-width="0.9"/></svg>
</div>
<div id="docarea">
<div style="left:1.6px;top:3px;width:11.6px;height:11.4px;background:#f6f6f6;border:1px solid #cfcfcf"></div>
<svg style="left:5.4px;top:7px" width="4" height="4" viewBox="0 0 4 4"><path d="M0.6 0 V3.4 H3.6" fill="none" stroke="#555" stroke-width="1"/></svg>
<div style="left:193.6px;top:4px;width:615.2px;height:7px;background:#c8c8c8"></div>
<div style="left:278.4px;top:4px;width:445.2px;height:7px;background:#fff"></div>
<svg id="hruler" style="left:0;top:0;will-change:transform" width="1000" height="18" viewBox="0 0 1000 18" font-family="Liberation Sans, sans-serif" font-size="6.2" font-weight="700" fill="#484848" stroke="none" text-anchor="middle"><text x="194.5" y="10.5">3</text><rect x="201.1" y="7.9" width="1" height="1" fill="#6a6a6a" stroke="none"/><rect x="208.2" y="7.4" width="0.9" height="2.6" fill="#777" stroke="none"/><rect x="215.3" y="7.9" width="1" height="1" fill="#6a6a6a" stroke="none"/><text x="222.9" y="10.5">2</text><rect x="229.5" y="7.9" width="1" height="1" fill="#6a6a6a" stroke="none"/><rect x="236.7" y="7.4" width="0.9" height="2.6" fill="#777" stroke="none"/><rect x="243.7" y="7.9" width="1" height="1" fill="#6a6a6a" stroke="none"/><text x="251.4" y="10.5">1</text><rect x="258.0" y="7.9" width="1" height="1" fill="#6a6a6a" stroke="none"/><rect x="265.1" y="7.4" width="0.9" height="2.6" fill="#777" stroke="none"/><rect x="272.2" y="7.9" width="1" height="1" fill="#6a6a6a" stroke="none"/><rect x="286.4" y="7.9" width="1" height="1" fill="#6a6a6a" stroke="none"/><rect x="293.6" y="7.4" width="0.9" height="2.6" fill="#777" stroke="none"/><rect x="300.6" y="7.9" width="1" height="1" fill="#6a6a6a" stroke="none"/><text x="308.2" y="10.5">1</text><rect x="314.9" y="7.9" width="1" height="1" fill="#6a6a6a" stroke="none"/><rect x="322.0" y="7.4" width="0.9" height="2.6" fill="#777" stroke="none"/><rect x="329.1" y="7.9" width="1" height="1" fill="#6a6a6a" stroke="none"/><text x="336.7" y="10.5">2</text><rect x="343.3" y="7.9" width="1" height="1" fill="#6a6a6a" stroke="none"/><rect x="350.5" y="7.4" width="0.9" height="2.6" fill="#777" stroke="none"/><rect x="357.5" y="7.9" width="1" height="1" fill="#6a6a6a" stroke="none"/><text x="365.1" y="10.5">3</text><rect x="371.8" y="7.9" width="1" height="1" fill="#6a6a6a" stroke="none"/><rect x="378.9" y="7.4" width="0.9" height="2.6" fill="#777" stroke="none"/><rect x="386.0" y="7.9" width="1" height="1" fill="#6a6a6a" stroke="none"/><text x="393.6" y="10.5">4</text><rect x="400.2" y="7.9" width="1" height="1" fill="#6a6a6a" stroke="none"/><rect x="407.4" y="7.4" width="0.9" height="2.6" fill="#777" stroke="none"/><rect x="414.4" y="7.9" width="1" height="1" fill="#6a6a6a" stroke="none"/><text x="422.1" y="10.5">5</text><rect x="428.7" y="7.9" width="1" height="1" fill="#6a6a6a" stroke="none"/><rect x="435.8" y="7.4" width="0.9" height="2.6" fill="#777" stroke="none"/><rect x="442.9" y="7.9" width="1" height="1" fill="#6a6a6a" stroke="none"/><text x="450.5" y="10.5">6</text><rect x="457.1" y="7.9" width="1" height="1" fill="#6a6a6a" stroke="none"/><rect x="464.3" y="7.4" width="0.9" height="2.6" fill="#777" stroke="none"/><rect x="471.3" y="7.9" width="1" height="1" fill="#6a6a6a" stroke="none"/><text x="479.0" y="10.5">7</text><rect x="485.6" y="7.9" width="1" height="1" fill="#6a6a6a" stroke="none"/><rect x="492.7" y="7.4" width="0.9" height="2.6" fill="#777" stroke="none"/><rect x="499.8" y="7.9" width="1" height="1" fill="#6a6a6a" stroke="none"/><text x="507.4" y="10.5">8</text><rect x="514.0" y="7.9" width="1" height="1" fill="#6a6a6a" stroke="none"/><rect x="521.2" y="7.4" width="0.9" height="2.6" fill="#777" stroke="none"/><rect x="528.2" y="7.9" width="1" height="1" fill="#6a6a6a" stroke="none"/><text x="535.9" y="10.5">9</text><rect x="542.5" y="7.9" width="1" height="1" fill="#6a6a6a" stroke="none"/><rect x="549.6" y="7.4" width="0.9" height="2.6" fill="#777" stroke="none"/><rect x="556.7" y="7.9" width="1" height="1" fill="#6a6a6a" stroke="none"/><text x="564.3" y="10.5">10</text><rect x="570.9" y="7.9" width="1" height="1" fill="#6a6a6a" stroke="none"/><rect x="578.1" y="7.4" width="0.9" height="2.6" fill="#777" stroke="none"/><rect x="585.1" y="7.9" width="1" height="1" fill="#6a6a6a" stroke="none"/><text x="592.8" y="10.5">11</text><rect x="599.4" y="7.9" width="1" height="1" fill="#6a6a6a" stroke="none"/><rect x="606.5" y="7.4" width="0.9" height="2.6" fill="#777" stroke="none"/><rect x="613.6" y="7.9" width="1" height="1" fill="#6a6a6a" stroke="none"/><text x="621.2" y="10.5">12</text><rect x="627.8" y="7.9" width="1" height="1" fill="#6a6a6a" stroke="none"/><rect x="635.0" y="7.4" width="0.9" height="2.6" fill="#777" stroke="none"/><rect x="642.0" y="7.9" width="1" height="1" fill="#6a6a6a" stroke="none"/><text x="649.6" y="10.5">13</text><rect x="656.3" y="7.9" width="1" height="1" fill="#6a6a6a" stroke="none"/><rect x="663.4" y="7.4" width="0.9" height="2.6" fill="#777" stroke="none"/><rect x="670.5" y="7.9" width="1" height="1" fill="#6a6a6a" stroke="none"/><text x="678.1" y="10.5">14</text><rect x="684.7" y="7.9" width="1" height="1" fill="#6a6a6a" stroke="none"/><rect x="691.9" y="7.4" width="0.9" height="2.6" fill="#777" stroke="none"/><rect x="698.9" y="7.9" width="1" height="1" fill="#6a6a6a" stroke="none"/><text x="706.5" y="10.5">15</text><rect x="713.2" y="7.9" width="1" height="1" fill="#6a6a6a" stroke="none"/><rect x="720.3" y="7.4" width="0.9" height="2.6" fill="#777" stroke="none"/><rect x="727.4" y="7.9" width="1" height="1" fill="#6a6a6a" stroke="none"/><text x="735.0" y="10.5">16</text><rect x="741.6" y="7.9" width="1" height="1" fill="#6a6a6a" stroke="none"/><rect x="748.8" y="7.4" width="0.9" height="2.6" fill="#777" stroke="none"/><rect x="755.8" y="7.9" width="1" height="1" fill="#6a6a6a" stroke="none"/><text x="763.5" y="10.5">17</text><rect x="770.1" y="7.9" width="1" height="1" fill="#6a6a6a" stroke="none"/><rect x="777.2" y="7.4" width="0.9" height="2.6" fill="#777" stroke="none"/><rect x="784.3" y="7.9" width="1" height="1" fill="#6a6a6a" stroke="none"/><text x="791.9" y="10.5">18</text><rect x="798.5" y="7.9" width="1" height="1" fill="#6a6a6a" stroke="none"/><path d="M276.2 2.8 H283.4 V4 L279.8 7.2 L276.2 4 Z" fill="#fdfdfd" stroke="#8a8a8a" stroke-width="0.7"/><path d="M276.2 11.4 V10.4 L279.8 7.4 L283.4 10.4 V11.4 Z" fill="#fdfdfd" stroke="#8a8a8a" stroke-width="0.7"/><rect x="276.9" y="11.8" width="5.8" height="4.8" fill="#fdfdfd" stroke="#8a8a8a" stroke-width="0.7"/><path d="M721 11.6 V10 L723.4 7.8 L725.8 10 V11.6 Z" fill="#fdfdfd" stroke="#8a8a8a" stroke-width="0.7"/></svg>
<div style="left:4px;top:28.6px;width:7px;height:72px;background:#c8c8c8"></div>
<div style="left:4px;top:100.6px;width:7px;height:334px;background:#fff"></div>
<svg id="vruler" style="left:0;top:0;will-change:transform" width="14" height="435" viewBox="0 0 14 435" font-family="Liberation Sans, sans-serif" font-size="6.2" font-weight="700" fill="#484848" stroke="none" text-anchor="middle"><rect x="7" y="35.9" width="1" height="1" fill="#6a6a6a" stroke="none"/><text transform="translate(10.1 43.5) rotate(-90)" x="0" y="0">2</text><rect x="7" y="50.1" width="1" height="1" fill="#6a6a6a" stroke="none"/><rect x="6.2" y="57.3" width="2.6" height="0.9" fill="#777" stroke="none"/><rect x="7" y="64.3" width="1" height="1" fill="#6a6a6a" stroke="none"/><text transform="translate(10.1 72.0) rotate(-90)" x="0" y="0">1</text><rect x="7" y="78.6" width="1" height="1" fill="#6a6a6a" stroke="none"/><rect x="6.2" y="85.7" width="2.6" height="0.9" fill="#777" stroke="none"/><rect x="7" y="92.8" width="1" height="1" fill="#6a6a6a" stroke="none"/><rect x="7" y="107.0" width="1" height="1" fill="#6a6a6a" stroke="none"/><rect x="6.2" y="114.2" width="2.6" height="0.9" fill="#777" stroke="none"/><rect x="7" y="121.2" width="1" height="1" fill="#6a6a6a" stroke="none"/><text transform="translate(10.1 128.8) rotate(-90)" x="0" y="0">1</text><rect x="7" y="135.5" width="1" height="1" fill="#6a6a6a" stroke="none"/><rect x="6.2" y="142.6" width="2.6" height="0.9" fill="#777" stroke="none"/><rect x="7" y="149.7" width="1" height="1" fill="#6a6a6a" stroke="none"/><text transform="translate(10.1 157.3) rotate(-90)" x="0" y="0">2</text><rect x="7" y="163.9" width="1" height="1" fill="#6a6a6a" stroke="none"/><rect x="6.2" y="171.1" width="2.6" height="0.9" fill="#777" stroke="none"/><rect x="7" y="178.1" width="1" height="1" fill="#6a6a6a" stroke="none"/><text transform="translate(10.1 185.8) rotate(-90)" x="0" y="0">3</text><rect x="7" y="192.4" width="1" height="1" fill="#6a6a6a" stroke="none"/><rect x="6.2" y="199.5" width="2.6" height="0.9" fill="#777" stroke="none"/><rect x="7" y="206.6" width="1" height="1" fill="#6a6a6a" stroke="none"/><text transform="translate(10.1 214.2) rotate(-90)" x="0" y="0">4</text><rect x="7" y="220.8" width="1" height="1" fill="#6a6a6a" stroke="none"/><rect x="6.2" y="228.0" width="2.6" height="0.9" fill="#777" stroke="none"/><rect x="7" y="235.0" width="1" height="1" fill="#6a6a6a" stroke="none"/><text transform="translate(10.1 242.7) rotate(-90)" x="0" y="0">5</text><rect x="7" y="249.3" width="1" height="1" fill="#6a6a6a" stroke="none"/><rect x="6.2" y="256.4" width="2.6" height="0.9" fill="#777" stroke="none"/><rect x="7" y="263.5" width="1" height="1" fill="#6a6a6a" stroke="none"/><text transform="translate(10.1 271.1) rotate(-90)" x="0" y="0">6</text><rect x="7" y="277.7" width="1" height="1" fill="#6a6a6a" stroke="none"/><rect x="6.2" y="284.9" width="2.6" height="0.9" fill="#777" stroke="none"/><rect x="7" y="291.9" width="1" height="1" fill="#6a6a6a" stroke="none"/><text transform="translate(10.1 299.6) rotate(-90)" x="0" y="0">7</text><rect x="7" y="306.2" width="1" height="1" fill="#6a6a6a" stroke="none"/><rect x="6.2" y="313.3" width="2.6" height="0.9" fill="#777" stroke="none"/><rect x="7" y="320.4" width="1" height="1" fill="#6a6a6a" stroke="none"/><text transform="translate(10.1 328.0) rotate(-90)" x="0" y="0">8</text><rect x="7" y="334.6" width="1" height="1" fill="#6a6a6a" stroke="none"/><rect x="6.2" y="341.8" width="2.6" height="0.9" fill="#777" stroke="none"/><rect x="7" y="348.8" width="1" height="1" fill="#6a6a6a" stroke="none"/><text transform="translate(10.1 356.5) rotate(-90)" x="0" y="0">9</text><rect x="7" y="363.1" width="1" height="1" fill="#6a6a6a" stroke="none"/><rect x="6.2" y="370.2" width="2.6" height="0.9" fill="#777" stroke="none"/><rect x="7" y="377.3" width="1" height="1" fill="#6a6a6a" stroke="none"/><text transform="translate(10.1 384.9) rotate(-90)" x="0" y="0">10</text><rect x="7" y="391.5" width="1" height="1" fill="#6a6a6a" stroke="none"/><rect x="6.2" y="398.7" width="2.6" height="0.9" fill="#777" stroke="none"/><rect x="7" y="405.7" width="1" height="1" fill="#6a6a6a" stroke="none"/><text transform="translate(10.1 413.4) rotate(-90)" x="0" y="0">11</text><rect x="7" y="420.0" width="1" height="1" fill="#6a6a6a" stroke="none"/><rect x="6.2" y="427.1" width="2.6" height="0.9" fill="#777" stroke="none"/></svg>
<div id="page"></div>
<div style="left:280.6px;top:100px;width:6.6px;height:22.8px;background:#cdcdcd;border:1px solid #bcbcbc;border-top-color:#c6c6c6;border-bottom-color:#c6c6c6"></div>
<div style="left:989.2px;top:17.5px;width:9.3px;height:416px;background:#dcdcdc;border-left:1px solid #cfcfcf"></div>
<div style="left:989.2px;top:17.5px;width:9.3px;height:10px;background:#fff;border:1px solid #c6c6c6"></div>
<svg style="left:991.4px;top:21px" width="5" height="3" viewBox="0 0 5 3"><path d="M0.3 2.7 L2.5 0.5 L4.7 2.7 Z" fill="#555"/></svg>
<div style="left:989.2px;top:27px;width:9.3px;height:201.8px;background:#fff;border:1px solid #c6c6c6"></div>
<div style="left:989.2px;top:425px;width:9.3px;height:8.6px;background:#fff;border:1px solid #c6c6c6"></div>
<svg style="left:991.4px;top:428px" width="5" height="3" viewBox="0 0 5 3"><path d="M0.3 0.3 L2.5 2.5 L4.7 0.3 Z" fill="#555"/></svg>
</div>
<div id="status">
<span class="t" style="left:5px;font-size:7.6px;color:#3c3c3c;top:3.25px;letter-spacing:-0.298px;">Página 1 de 1</span><span class="t" style="left:61px;font-size:7.6px;color:#3c3c3c;top:3.25px;letter-spacing:-0.227px;">0 palabras</span><span class="t" style="left:106.4px;font-size:7.6px;color:#3c3c3c;top:3.25px;letter-spacing:-0.249px;">Español (Colombia)</span><svg style="left:181px;top:2.6px" width="9" height="8" viewBox="0 0 9 8"><rect x="0.9" y="2.2" width="7.2" height="5.2" fill="#fff" stroke="#6a6a6a" stroke-width="0.8"/><rect x="0.9" y="4.6" width="7.2" height="1.2" fill="#9a9a9a"/><circle cx="1.8" cy="1.4" r="1.3" fill="#444"/><rect x="4.6" y="0.6" width="3.6" height="1" fill="#b03030"/></svg>
<svg style="left:811px;top:2.2px" width="10" height="8" viewBox="0 0 10 8"><path d="M0.5 0.8 H4 L5 1.6 L6 0.8 H9.5 V7 H6 L5 7.6 L4 7 H0.5 Z" fill="#fff" stroke="#7a7a7a" stroke-width="0.8"/><path d="M5 1.6 V7.4 M1.6 2.6 H3.4 M1.6 4 H3.4 M6.6 2.6 H8.4 M6.6 4 H8.4" stroke="#8a8a8a" stroke-width="0.6"/></svg>
<div style="left:829px;top:0px;width:24.6px;height:13px;background:#c8c8c8"></div>
<svg style="left:837px;top:2px" width="9" height="9" viewBox="0 0 9 9"><rect x="0.5" y="0.5" width="8" height="8" fill="#d8d8d8" stroke="#6e6e6e" stroke-width="0.8"/><path d="M2.4 0.5 V8.5 M6.6 0.5 V8.5" stroke="#6e6e6e" stroke-width="0.6"/></svg>
<svg style="left:862.4px;top:2px" width="10" height="9" viewBox="0 0 10 9"><rect x="0.5" y="0.5" width="6.6" height="7.4" fill="#fff" stroke="#7a7a7a" stroke-width="0.8"/><path d="M1.6 2.4 H5.8 M1.6 4 H4 M2.8 0.5 V7.6" stroke="#8a8a8a" stroke-width="0.6"/><circle cx="6.8" cy="6.2" r="2.1" fill="#fff" stroke="#555" stroke-width="0.8"/></svg>
<div style="left:883px;top:6.1px;width:4.6px;height:1px;background:#555"></div>
<div style="left:891px;top:6.1px;width:63px;height:1px;background:#6a6a6a"></div>
<div style="left:923px;top:3px;width:2.8px;height:7.4px;background:#444"></div>
<div style="left:957px;top:6.1px;width:4.8px;height:1px;background:#777"></div>
<div style="left:958.9px;top:4.2px;width:1px;height:4.8px;background:#777"></div>
<span class="t" style="left:970.4px;font-size:7.6px;color:#3c3c3c;top:3.25px;letter-spacing:-0.609px;">120%</span></div>
<svg id="mark" style="left:940px;top:484px" width="56" height="56" viewBox="0 0 56 56"><circle cx="26.8" cy="26.9" r="25.2" fill="#f4f6fa" fill-opacity="0.55"/><circle cx="26.8" cy="26.9" r="24.5" fill="#fff"/><path d="M27.6 37.4 C27.1 36.8 25.8 34.8 24.6 33.8 C23.4 32.8 21.9 32.3 20.5 31.7 C19.1 31.1 17.7 31.0 16.4 30.2 C15.1 29.4 13.8 28.0 12.8 26.6 C11.9 25.2 11.0 23.5 10.7 22.0 C10.3 20.5 10.3 18.9 10.7 17.4 C11.0 15.9 11.8 14.2 12.8 12.8 C13.8 11.4 15.4 10.2 16.9 9.2 C18.4 8.2 20.2 7.5 22.0 7.0 C23.8 6.5 25.8 6.2 27.6 6.3 C29.4 6.4 31.3 6.8 32.8 7.4 C34.3 8.1 35.7 9.0 36.8 10.2 C37.9 11.3 38.9 12.9 39.4 14.3 C39.9 15.8 40.1 17.4 39.9 18.9 C39.7 20.4 39.0 21.9 38.4 23.5 C37.8 25.1 36.8 27.1 36.3 28.7 C35.8 30.2 35.4 31.7 35.3 32.8 C35.2 33.9 36.6 34.3 35.8 35.3 C35.0 36.3 31.9 37.8 30.7 38.9 C29.5 40.0 28.7 41.3 28.5 42.0 C28.3 42.7 28.6 43.1 29.7 43.0 C30.8 42.9 33.0 41.9 34.8 41.5 C36.6 41.1 39.4 40.8 40.4 40.9 C41.4 41.0 41.3 41.1 40.9 42.0 C40.5 42.9 39.6 44.9 37.9 46.1 C36.2 47.3 31.9 48.8 30.7 49.3" fill="none" stroke="#5585c6" stroke-width="1.5" stroke-linecap="round" stroke-linejoin="round"/></svg>
<div id="edge-l"></div><div id="edge-r"></div><div id="edge-b"></div>
<div style="left:998px;top:40px;width:1px;height:507px;background:#3a78bd;opacity:0.35"></div>
<svg style="left:0;top:0" width="3" height="3" viewBox="0 0 3 3"><path d="M0 0 H3 A3 3 0 0 0 0 3 Z" fill="#ab9dd2"/></svg>
<svg style="left:997px;top:0" width="3" height="3" viewBox="0 0 3 3"><path d="M3 0 H0 A3 3 0 0 1 3 3 Z" fill="#ab9dd2"/></svg>
<svg style="left:0;top:543px" width="4" height="4" viewBox="0 0 4 4"><path d="M0 0 A4 4 0 0 0 4 4 H1 A1 3 0 0 1 1 0 Z" fill="#3a78bd"/><path d="M0 4 H3 A3 3 0 0 1 0 1 Z" fill="#a9a0cf"/></svg>
<svg style="left:996px;top:543px" width="4" height="4" viewBox="0 0 4 4"><path d="M4 0 A4 4 0 0 1 0 4 H3 Z" fill="#3a78bd"/><path d="M4 4 H1 A3 3 0 0 0 4 1 Z" fill="#8f9db3"/></svg>
</div>
</body>
</html>
